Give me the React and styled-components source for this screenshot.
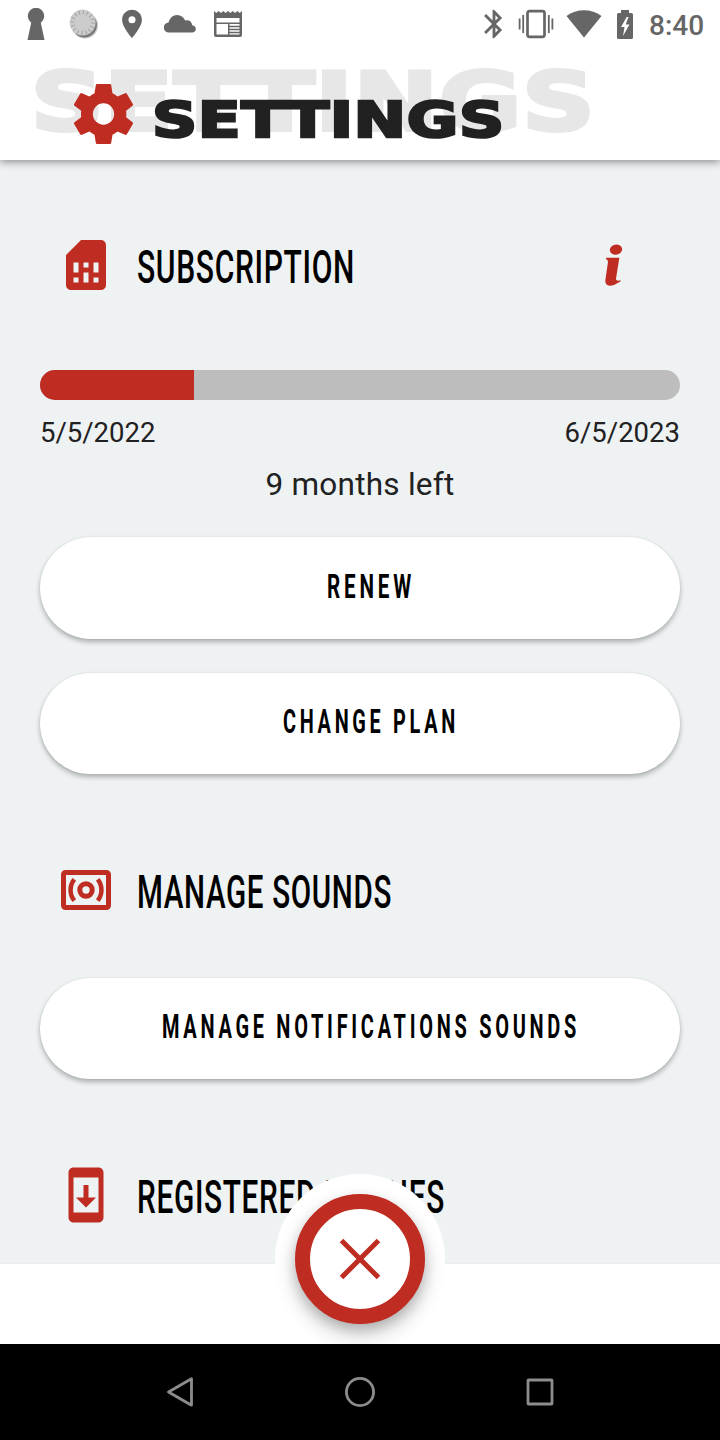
import { useLayoutEffect, useRef, useState } from "react";
import styled, { createGlobalStyle } from "styled-components";
import {
  MdBluetooth,
  MdPlace,
  MdSimCard,
  MdSystemUpdate,
} from "react-icons/md";

const RED = "#bf2c22";
const STATUS = "#666666";

const GlobalStyle = createGlobalStyle`
  * {
    box-sizing: border-box;
  }

  body {
    margin: 0;
    font-family: Roboto, "Liberation Sans", sans-serif;
  }

  svg {
    display: block;
  }
`;

const Screen = styled.div`
  width: 720px;
  height: 1440px;
  overflow: hidden;

  display: flex;
  flex-direction: column;

  background: #eef2f3;
  color: #212121;
`;

const Header = styled.header`
  height: 160px;
  flex: none;
  position: relative;
  z-index: 1;

  background: white;
  box-shadow: 0 2px 8px rgba(0, 0, 0, 0.42);
`;

const StatusBar = styled.div`
  height: 48px;
  padding: 0 16px 0 12px;

  display: flex;
  align-items: center;

  color: ${STATUS};
`;

const StatusCell = styled.div`
  width: ${({ $width }) => $width || 48}px;
  display: flex;
  justify-content: center;
`;

const StatusSpacer = styled.div`
  flex: 1;
`;

const Clock = styled.div`
  width: 55px;
  margin-left: 9px;
  padding-top: 3px;

  font-size: 28px;
  font-weight: 500;
  line-height: 32px;
`;

const TitleBar = styled.div`
  height: 112px;
  padding: 36px 0 0 74px;

  display: flex;
  align-items: flex-start;
`;

const TitleIcon = styled.div`
  position: relative;
`;

const Title = styled.h1`
  margin: 0 0 0 18px;
  padding-top: 2px;
  position: relative;

  font-family: "DejaVu Sans", sans-serif;
  font-size: 50.5px;
  font-weight: bold;
  letter-spacing: 0.5px;
  line-height: 68px;
  -webkit-text-stroke: 2.6px #212121;
`;

const TitleShadow = styled.div`
  position: absolute;
  top: 53px;
  left: 31px;

  color: #e7e7e7;
  font-family: "DejaVu Sans", sans-serif;
  font-size: 80px;
  font-weight: bold;
  letter-spacing: 0.8px;
  line-height: 100px;
  -webkit-text-stroke: 4px #e7e7e7;
`;

const Fit = styled.span`
  display: block;
  width: ${({ $width }) => $width}px;
  white-space: nowrap;
`;

const FitInner = styled.span`
  display: inline-block;
  transform-origin: left center;
`;

const Content = styled.main`
  flex: 1;
  min-height: 0;
  overflow: hidden;
  padding: 75px 40px 0;
`;

const SectionHead = styled.div`
  height: 60px;
  margin-top: ${({ $first }) => ($first ? 0 : 85.5)}px;
  padding: 0 57px 0 16px;

  display: flex;
  align-items: center;
`;

const SectionIcon = styled.div`
  width: 60px;
  display: flex;
  justify-content: center;

  color: ${RED};
`;

const SectionTitle = styled.h2`
  margin: 0 auto 0 20.5px;
  padding-top: 6px;

  color: black;
  font-size: 45.5px;
  font-weight: 500;
  letter-spacing: 1px;
  line-height: 60px;
`;

const Progress = styled.div`
  height: 30px;
  margin-top: 74.5px;
  overflow: hidden;

  background: #bdbdbd;
  border-radius: 15px;
`;

const ProgressFill = styled.div`
  height: 100%;
  background: ${RED};
`;

const Dates = styled.div`
  margin-top: 17.5px;

  display: flex;
  justify-content: space-between;

  font-size: 27.5px;
  line-height: 32px;
`;

const Remaining = styled.div`
  margin-top: 16px;

  font-size: 31.5px;
  letter-spacing: 0.25px;
  line-height: 40px;
  text-align: center;
`;

const ButtonList = styled.div`
  margin-top: ${({ $top }) => $top}px;

  display: flex;
  flex-direction: column;
  gap: 34px;
`;

const PillButton = styled.button`
  height: 101.5px;
  padding: 0 0 2px 22px;

  display: flex;
  justify-content: center;
  align-items: center;

  background: white;
  border: none;
  border-radius: 51px;
  box-shadow: 0 3px 5px rgba(0, 0, 0, 0.28), 0 0 2px rgba(0, 0, 0, 0.08);

  color: black;
  font-family: inherit;
  font-size: 32.3px;
  font-weight: 700;
  letter-spacing: 6px;
  text-align: left;
`;

const Dock = styled.div`
  height: 80.5px;
  flex: none;
  position: relative;

  background: white;
  box-shadow: 0 0 2px rgba(0, 0, 0, 0.08);
`;

const CloseHalo = styled.div`
  width: 170px;
  height: 170px;

  position: absolute;
  top: -89.5px;
  left: 275px;
  display: flex;
  justify-content: center;
  align-items: center;

  background: white;
  border-radius: 50%;
`;

const CloseButton = styled.button`
  width: 130px;
  height: 130px;
  padding: 0;

  display: flex;
  justify-content: center;
  align-items: center;

  background: white;
  border: 15px solid ${RED};
  border-radius: 50%;
  box-shadow: 0 10px 20px rgba(0, 0, 0, 0.22), 0 5px 12px rgba(0, 0, 0, 0.15);
`;

const NavBar = styled.nav`
  height: 96px;
  flex: none;
  padding: 0 90px;
  position: relative;

  display: flex;

  background: black;
`;

const NavItem = styled.div`
  flex: 1;
  display: flex;
  justify-content: center;
  align-items: center;
`;

// Stretches or squeezes a line of text to the given width
const FitText = ({ width, children }) => {
  const ref = useRef(null);
  const [scale, setScale] = useState(1);

  useLayoutEffect(() => {
    setScale(width / ref.current.offsetWidth);
  }, [width, children]);

  return (
    <Fit $width={width}>
      <FitInner ref={ref} style={{ transform: `scaleX(${scale})` }}>
        {children}
      </FitInner>
    </Fit>
  );
};

const KeyholeIcon = () => (
  <svg width="18" height="32" viewBox="0 0 18 32" fill="currentColor">
    <circle cx="9" cy="8" r="8.2" />
    <path d="M4.8 12h8.4L17.5 32H.5z" />
  </svg>
);

const CoinIcon = () => (
  <svg width="30" height="30" viewBox="0 0 30 30">
    <circle cx="16" cy="16.5" r="13" fill="#c9c9c9" />
    <circle cx="15.3" cy="15.8" r="12.6" fill="#777" />
    <circle cx="13.6" cy="13.6" r="13" fill="#cccccc" />
    <circle
      cx="13.6"
      cy="13.6"
      r="10.2"
      fill="none"
      stroke="#a2a2a2"
      strokeWidth="4"
      strokeDasharray="1 3.005"
    />
  </svg>
);

const CloudIcon = () => (
  <svg width="32" height="18" viewBox="0 0 32 18" fill="currentColor">
    <path d="M5 17.5a5 5 0 0 1-.4-10C5.6 3 9 0 13.2 0c3.6 0 6.5 2.1 8 5.5 4-.8 6.6 1.2 7 4.8 2.2.2 3.6 1.7 3.6 3.6 0 2-1.6 3.6-3.7 3.6z" />
  </svg>
);

const NewsIcon = () => (
  <svg width="28" height="27" viewBox="0 0 28 27">
    <path
      fill={STATUS}
      fillRule="evenodd"
      d="M0 0l2.3 2L4.7 0 7 2l2.3-2 2.4 2L14 0l2.3 2 2.4-2L21 2l2.3-2 2.4 2L28 0v24q0 2-2 2H2q-2 0-2-2zM2.5 7v4.5h23V7zM2.5 13v10.5h11.5V13zM15.5 13v1.7h10V13zM15.5 16.2v1.5h10v-1.5zM15.5 19.2v1.5h10v-1.5zM15.5 22.2v1.3h10v-1.3z"
    />
  </svg>
);

const VibrateIcon = () => (
  <svg
    width="36"
    height="30"
    viewBox="0 0 36 30"
    fill="none"
    stroke="currentColor"
  >
    <rect x="9.5" y="2.2" width="17" height="25.6" rx="2" strokeWidth="2.7" />
    <path d="M1.6 9.5v11M5.2 6v18M30.8 6v18M34.4 9.5v11" strokeWidth="1.8" />
  </svg>
);

const WifiIcon = () => (
  <svg width="36" height="28" viewBox="0 0 36 28" fill="currentColor">
    <path d="M.5 6C5.5 2.3 11.5.3 18 .3S30.5 2.3 35.5 6L18 27.5z" />
  </svg>
);

const BatteryIcon = () => (
  <svg width="16" height="29" viewBox="0 0 16 29">
    <path
      fill={STATUS}
      d="M1.5 3H4V0h8v3h2.5Q16 3 16 4.5v23q0 1.5-1.5 1.5h-13Q0 29 0 27.5v-23Q0 3 1.5 3z"
    />
    <path fill="#fff" d="M9.7 7L4 17h3.5L6 26l6.5-11.5H8.7L11.5 7z" />
  </svg>
);

const GearIcon = () => (
  <svg width="60" height="60" viewBox="162 87 180 180">
    <path
      fill={RED}
      fillRule="evenodd"
      d="M231 87h39q3 0 3.5 3l4 25q8 4 15 9.5l23-10q3-1.5 5 1.5l18 31q1.5 3-1 5l-19 15q1 10 0 20l19 15q2.5 2 1 5l-18 31q-2 3-5 1.5l-23-10q-7 5.5-15 9.5l-4 25q-.5 3-3.5 3h-39q-3 0-3.5-3l-4-25q-8-4-15-9.5l-23 10q-3 1.5-5-1.5l-18-31q-1.5-3 1-5l20-15q-1-10 0-20l-20-15q-2.5-2-1-5l18-31q2-3 5-1.5l23 10q7-5.5 15-9.5l4-25q.5-3 3.5-3zM250.5 145a32 32 0 1 0 0 64 32 32 0 0 0 0-64z"
    />
  </svg>
);

const SpeakerIcon = () => (
  <svg width="50" height="40" viewBox="0 0 50 40" fill="none" stroke={RED}>
    <rect x="2.5" y="2.5" width="45" height="35" rx="2" strokeWidth="5" />
    <circle cx="25" cy="20" r="6.2" strokeWidth="5" />
    <path
      d="M13.3 9.3C8.3 15.5 8.3 24.5 13.3 30.7M36.7 9.3C41.7 15.5 41.7 24.5 36.7 30.7"
      strokeWidth="4.5"
    />
  </svg>
);

const InfoIcon = () => (
  <svg width="18" height="42" viewBox="75 43 54 126" fill={RED}>
    <ellipse cx="108" cy="60" rx="18.5" ry="15" transform="rotate(-12 108 60)" />
    <path d="M78 84L118 84 108 147Q107 156 123 152 122 157 113 160 101 169 89 168 75 166 76 152L84 97Q84 89 78 88Z" />
  </svg>
);

const CloseIcon = () => (
  <svg width="42" height="42" viewBox="0 0 42 42" stroke={RED} strokeWidth="5">
    <path d="M2.5 2.5l37 37M39.5 2.5l-37 37" />
  </svg>
);

const App = () => {
  const subscription = { start: "5/5/2022", end: "6/5/2023", used: 24.1 };

  return (
    <>
      <GlobalStyle />
      <Screen>
        <Header>
          <StatusBar>
            <StatusCell>
              <KeyholeIcon />
            </StatusCell>
            <StatusCell>
              <CoinIcon />
            </StatusCell>
            <StatusCell>
              <MdPlace size={34} />
            </StatusCell>
            <StatusCell>
              <CloudIcon />
            </StatusCell>
            <StatusCell>
              <NewsIcon />
            </StatusCell>
            <StatusSpacer />
            <StatusCell $width={43}>
              <MdBluetooth size={34} />
            </StatusCell>
            <StatusCell $width={42}>
              <VibrateIcon />
            </StatusCell>
            <StatusCell $width={53}>
              <WifiIcon />
            </StatusCell>
            <StatusCell $width={30}>
              <BatteryIcon />
            </StatusCell>
            <Clock>8:40</Clock>
          </StatusBar>
          <TitleShadow aria-hidden="true">
            <FitText width={565}>SETTINGS</FitText>
          </TitleShadow>
          <TitleBar>
            <TitleIcon>
              <GearIcon />
            </TitleIcon>
            <Title>
              <FitText width={353}>SETTINGS</FitText>
            </Title>
          </TitleBar>
        </Header>

        <Content>
          <SectionHead $first>
            <SectionIcon>
              <MdSimCard size={60} />
            </SectionIcon>
            <SectionTitle>
              <FitText width={218}>SUBSCRIPTION</FitText>
            </SectionTitle>
            <InfoIcon />
          </SectionHead>
          <Progress>
            <ProgressFill style={{ width: `${subscription.used}%` }} />
          </Progress>
          <Dates>
            <span>{subscription.start}</span>
            <span>{subscription.end}</span>
          </Dates>
          <Remaining>9 months left</Remaining>
          <ButtonList $top={32}>
            <PillButton>
              <FitText width={88}>RENEW</FitText>
            </PillButton>
            <PillButton>
              <FitText width={176}>CHANGE PLAN</FitText>
            </PillButton>
          </ButtonList>

          <SectionHead>
            <SectionIcon>
              <SpeakerIcon />
            </SectionIcon>
            <SectionTitle>
              <FitText width={255}>MANAGE SOUNDS</FitText>
            </SectionTitle>
          </SectionHead>
          <ButtonList $top={58}>
            <PillButton>
              <FitText width={418}>MANAGE NOTIFICATIONS SOUNDS</FitText>
            </PillButton>
          </ButtonList>

          <SectionHead>
            <SectionIcon>
              <MdSystemUpdate size={60} />
            </SectionIcon>
            <SectionTitle>
              <FitText width={308}>REGISTERED PHONES</FitText>
            </SectionTitle>
          </SectionHead>
        </Content>

        <Dock>
          <CloseHalo>
            <CloseButton aria-label="Close">
              <CloseIcon />
            </CloseButton>
          </CloseHalo>
        </Dock>

        <NavBar>
          <NavItem>
            <svg width="30" height="32" viewBox="0 0 30 32" fill="none" stroke="#8c8c8c">
              <path d="M3.5 16L26.5 2.8v26.4z" strokeWidth="2.8" strokeLinejoin="round" />
            </svg>
          </NavItem>
          <NavItem>
            <svg width="32" height="32" viewBox="0 0 32 32" fill="none" stroke="#8c8c8c">
              <circle cx="16" cy="16" r="13.6" strokeWidth="2.8" />
            </svg>
          </NavItem>
          <NavItem>
            <svg width="28" height="28" viewBox="0 0 28 28" fill="none" stroke="#8c8c8c">
              <rect x="2" y="2" width="24" height="24" rx="0.5" strokeWidth="2.8" />
            </svg>
          </NavItem>
        </NavBar>
      </Screen>
    </>
  );
};

export default App;
